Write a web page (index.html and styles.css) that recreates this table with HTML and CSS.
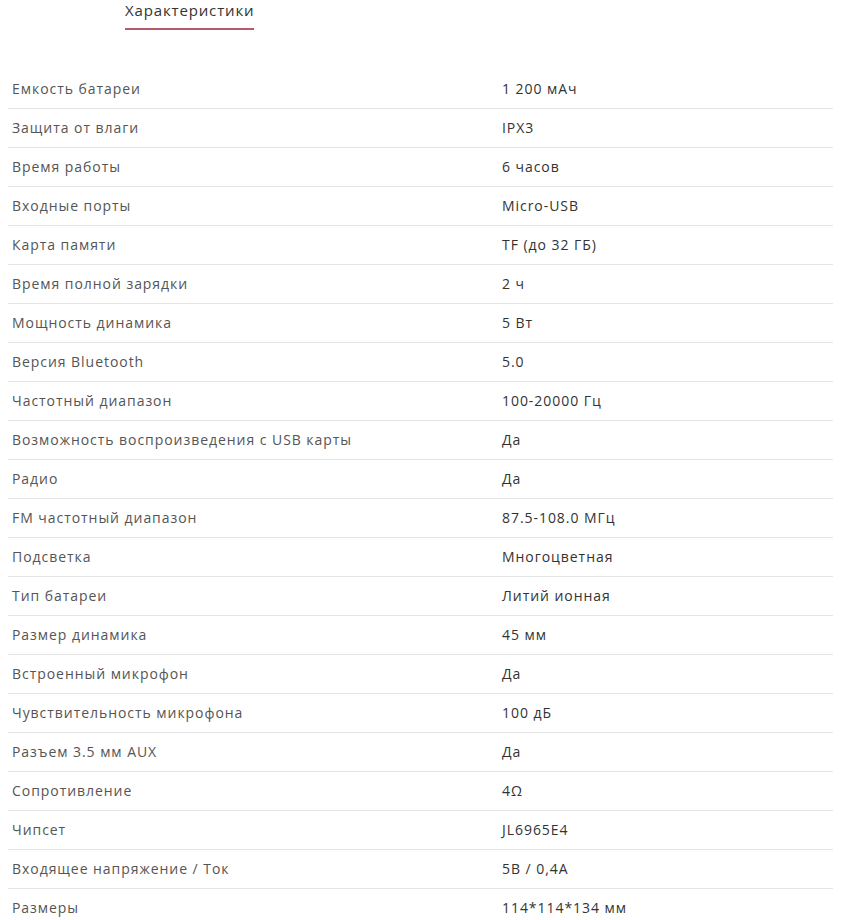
FILE: index.html
```html
<!DOCTYPE html>
<html lang="ru">
<head>
<meta charset="utf-8">
<link rel="stylesheet" href="styles.css">
</head>
<body>
<div class="tabs">
  <div class="tab active">Характеристики</div>
</div>
<div class="specs">
  <div class="row"><div class="k">Емкость батареи</div><div class="v">1 200 мАч</div></div>
  <div class="row"><div class="k">Защита от влаги</div><div class="v">IPX3</div></div>
  <div class="row"><div class="k">Время работы</div><div class="v">6 часов</div></div>
  <div class="row"><div class="k">Входные порты</div><div class="v">Micro-USB</div></div>
  <div class="row"><div class="k">Карта памяти</div><div class="v">TF (до 32 ГБ)</div></div>
  <div class="row"><div class="k">Время полной зарядки</div><div class="v">2 ч</div></div>
  <div class="row"><div class="k">Мощность динамика</div><div class="v">5 Вт</div></div>
  <div class="row"><div class="k">Версия Bluetooth</div><div class="v">5.0</div></div>
  <div class="row"><div class="k">Частотный диапазон</div><div class="v">100-20000 Гц</div></div>
  <div class="row"><div class="k">Возможность воспроизведения с USB карты</div><div class="v">Да</div></div>
  <div class="row"><div class="k">Радио</div><div class="v">Да</div></div>
  <div class="row"><div class="k">FM частотный диапазон</div><div class="v">87.5-108.0 МГц</div></div>
  <div class="row"><div class="k">Подсветка</div><div class="v">Многоцветная</div></div>
  <div class="row"><div class="k">Тип батареи</div><div class="v">Литий ионная</div></div>
  <div class="row"><div class="k">Размер динамика</div><div class="v">45 мм</div></div>
  <div class="row"><div class="k">Встроенный микрофон</div><div class="v">Да</div></div>
  <div class="row"><div class="k">Чувствительность микрофона</div><div class="v">100 дБ</div></div>
  <div class="row"><div class="k">Разъем 3.5 мм AUX</div><div class="v">Да</div></div>
  <div class="row"><div class="k">Сопротивление</div><div class="v">4Ω</div></div>
  <div class="row"><div class="k">Чипсет</div><div class="v">JL6965E4</div></div>
  <div class="row"><div class="k">Входящее напряжение / Ток</div><div class="v">5В / 0,4А</div></div>
  <div class="row"><div class="k">Размеры</div><div class="v">114*114*134 мм</div></div>
</div>
</body>
</html>
```
FILE: styles.css
```css
html, body {
  margin: 0;
  padding: 0;
  background: #fff;
}
body {
  padding: 0 8px;
  font-family: "Open Sans", "Liberation Sans", sans-serif;
  color: #333;
}
.tabs {
  display: flex;
  padding-left: 117px;
  height: 30px;
}
.tab {
  font-size: 15px;
  line-height: 20px;
  color: #333;
  letter-spacing: 0.85px;
  border-bottom: 2px solid #b75a6c;
  height: 30px;
  box-sizing: border-box;
}
.specs {
  margin-top: 40px;
}
.row {
  display: grid;
  grid-template-columns: 490px 1fr;
  align-items: center;
  height: 39px;
  box-sizing: border-box;
  padding-bottom: 2px;
  border-bottom: 1px solid #e4e4e4;
  font-size: 14px;
  letter-spacing: 0.95px;
}
.k, .v {
  padding: 0 4px;
}
.k {
  color: #555;
}
.v {
  color: #333;
}
```
